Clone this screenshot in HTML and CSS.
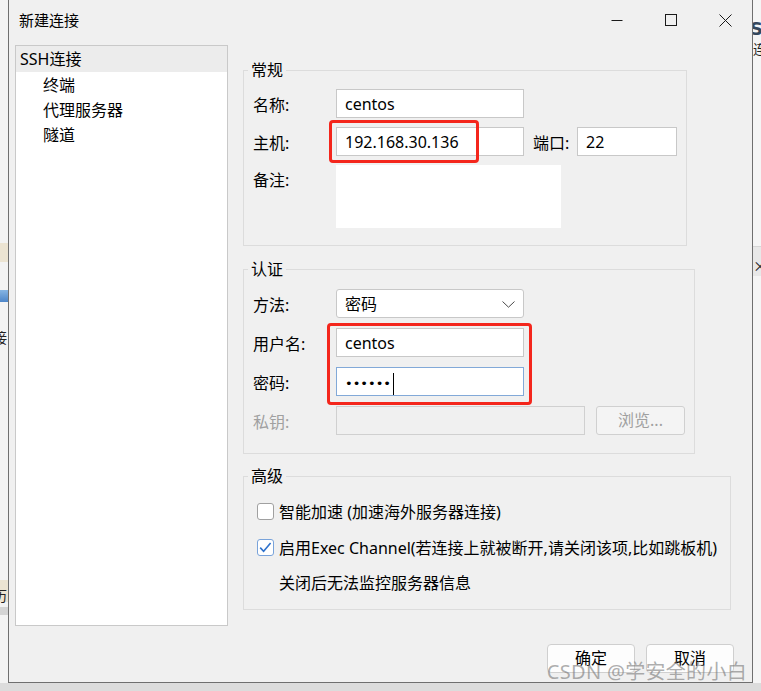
FILE: index.html
```html
<!DOCTYPE html>
<html lang="zh-CN">
<head>
  <meta charset="UTF-8">
  <meta name="viewport" content="width=device-width, initial-scale=1.0">
  <title>新建连接</title>
  <link rel="stylesheet" href="styles.css">
</head>
<body>
  <div class="desk">
    <!-- fenêtre derrière, bord gauche -->
    <div class="edge edge-left">
      <div class="band band-a"></div>
      <div class="tile-icon"></div>
      <div class="peek peek-left">接</div>
      <div class="band band-b"><span class="peek peek-left">历</span></div>
      <div class="band band-c"></div>
    </div>

    <div class="dialog">
      <!-- Titre -->
      <div class="titlebar">
        <span class="title">新建连接</span>
        <div class="caption">
          <span class="cap">
            <svg width="12" height="12" viewBox="0 0 12 12"><path d="M0.5 6.5H11.5" stroke="#1a1a1a" stroke-width="1"/></svg>
          </span>
          <span class="cap">
            <svg width="12" height="12" viewBox="0 0 12 12"><rect x="0.5" y="0.5" width="11" height="11" fill="none" stroke="#1a1a1a" stroke-width="1"/></svg>
          </span>
          <span class="cap">
            <svg width="13" height="13" viewBox="0 0 13 13"><path d="M0.5 0.5L12.5 12.5M12.5 0.5L0.5 12.5" stroke="#1a1a1a" stroke-width="1"/></svg>
          </span>
        </div>
      </div>

      <div class="main">
        <!-- Arbre -->
        <ul class="tree">
          <li class="node selected">SSH连接</li>
          <li class="node">终端</li>
          <li class="node">代理服务器</li>
          <li class="node">隧道</li>
        </ul>

        <div class="pane">
          <!-- 常规 -->
          <fieldset class="group general">
            <legend>常规</legend>
            <div class="form general-form">
              <label>名称:</label>
              <div class="field">centos</div>
              <span></span><span></span>

              <label>主机:</label>
              <div class="field">192.168.30.136<span class="mark mark-host"></span></div>
              <label class="port-label">端口:</label>
              <div class="field">22</div>

              <label class="top">备注:</label>
              <div class="field memo"></div>
            </div>
          </fieldset>

          <!-- 认证 -->
          <fieldset class="group auth">
            <legend>认证</legend>
            <div class="form auth-form">
              <label>方法:</label>
              <div class="field select">
                <span>密码</span>
                <svg width="13" height="7" viewBox="0 0 13 7"><path d="M0.5 0.5L6.5 6.2L12.5 0.5" fill="none" stroke="#4a4a4a" stroke-width="1"/></svg>
              </div>

              <label>用户名:</label>
              <div class="field">centos<span class="mark mark-login"></span></div>

              <label>密码:</label>
              <div class="field focus"><span class="dots">••••••</span><span class="caret"></span></div>

              <label class="muted">私钥:</label>
              <div class="key-row">
                <div class="field disabled"></div>
                <div class="browse">浏览...</div>
              </div>
            </div>
          </fieldset>

          <!-- 高级 -->
          <fieldset class="group adv">
            <legend>高级</legend>
            <div class="options">
              <div class="check-row"><span class="box"></span>智能加速 (加速海外服务器连接)</div>
              <div class="check-row">
                <span class="box on">
                  <svg width="15" height="15" viewBox="0 0 15 15"><path d="M2.2 7.6L5.6 11.2L12.6 3" fill="none" stroke="#2f72cc" stroke-width="1.6"/></svg>
                </span>启用Exec Channel(若连接上就被断开,请关闭该项,比如跳板机)
              </div>
              <div class="note">关闭后无法监控服务器信息</div>
            </div>
          </fieldset>
        </div>
      </div>

      <div class="footer">
        <button class="btn">确定</button>
        <button class="btn">取消</button>
      </div>

      <div class="watermark">CSDN @学安全的小白</div>
    </div>

    <!-- fenêtre derrière, bord droit -->
    <div class="edge edge-right">
      <div class="peek logo-peek">S</div>
      <div class="peek text-peek">连</div>
      <div class="band band-d"><span class="peek">×</span></div>
    </div>
  </div>
</body>
</html>
```

FILE: styles.css
```css
/* Base */
* {
  box-sizing: border-box;
}
html, body {
  margin: 0;
  padding: 0;
}
body {
  width: 761px;
  height: 691px;
  overflow: hidden;
  background: #dcdcdc;
  font-family: "Noto Sans", "Noto Sans CJK SC", sans-serif;
  font-size: 16px;
  color: #000;
}
.desk {
  display: flex;
  height: 691px;
}
/* Bords de la fenêtre de fond */
.edge {
  flex: none;
  width: 8px;
  height: 683px;
  overflow: hidden;
  display: flex;
  flex-direction: column;
  background: #f3f3f3;
}
.band-a {
  margin-top: 243px;
  height: 19px;
  background: #ece4d2;
}
.tile-icon {
  margin-top: 28px;
  height: 12px;
  background: linear-gradient(#86b5e3, #4d85c8);
}
.peek {
  white-space: nowrap;
  font-family: "Noto Sans CJK SC", sans-serif;
  font-size: 14px;
  line-height: 14px;
  color: #222;
}
.peek-left {
  margin-left: -7px;
}
.edge-left > .peek-left {
  margin-top: 28px;
}
.band-b {
  margin-top: 236px;
  height: 22px;
  background: #ece4d2;
  padding-top: 4px;
}
.band-c {
  margin-top: 5px;
  height: 8px;
  background: #d4d4d4;
}
.edge-right {
  background: #f5f5f5;
}
.logo-peek {
  margin-top: 20px;
  margin-left: -3px;
  font-family: "DejaVu Sans", sans-serif;
  font-weight: bold;
  font-size: 18px;
  line-height: 18px;
  color: #34475c;
}
.text-peek {
  margin-top: 4px;
  font-size: 13px;
}
.band-d {
  margin-top: 190px;
  height: 30px;
  background: #e8e8e8;
  border-top: 1px solid #d6d6d6;
  padding-top: 7px;
  color: #444;
}
/* Dialogue */
.dialog {
  flex: none;
  position: relative;
  width: 745px;
  height: 683px;
  background: #f0f0f0;
  border: 1px solid #6f6f6f;
  border-top: 0;
  display: flex;
  flex-direction: column;
}
.titlebar {
  height: 45px;
  display: flex;
  align-items: flex-start;
}
.title {
  flex: 1;
  padding-left: 10px;
  line-height: 40px;
  font-size: 15px;
}
.caption {
  display: flex;
}
.cap {
  width: 54px;
  height: 40px;
  display: flex;
  align-items: center;
  justify-content: center;
}
.main {
  display: flex;
  gap: 15px;
  height: 581px;
  padding-left: 6px;
}
/* Arbre */
.tree {
  flex: none;
  width: 213px;
  height: 581px;
  margin: 0;
  padding: 0;
  list-style: none;
  background: #fff;
  border: 1px solid #c9c9c9;
}
.node {
  padding-top: 2px;
  line-height: 23px;
  padding-left: 27px;
  white-space: nowrap;
}
.node.selected {
  padding-top: 1px;
  line-height: 25px;
  padding-left: 4px;
  background: #ececec;
}
/* Groupes */
.pane {
  padding-top: 17px;
  display: flex;
  flex-direction: column;
  align-items: flex-start;
}
.group {
  margin: 0;
  min-width: 0;
  border: 1px solid #dcdcdc;
  padding: 11px 9px 17px;
}
.group legend {
  padding: 0 3px;
  margin-left: -5px;
  font-size: 16px;
  line-height: 16px;
}
.general {
  width: 444px;
}
.auth {
  width: 452px;
  margin-top: 15px;
  padding-top: 12px;
  padding-bottom: 18px;
}
.adv {
  width: 488px;
  margin-top: 14px;
  padding-top: 14px;
  padding-bottom: 13px;
}
.form {
  display: grid;
  align-items: center;
}
.general-form {
  grid-template-columns: 83px 188px 53px 100px;
  row-gap: 9px;
}
.auth-form {
  grid-template-columns: 83px 1fr;
  row-gap: 10px;
}
.auth-form > .field {
  width: 188px;
}
label {
  white-space: nowrap;
  padding-top: 1px;
}
.port-label {
  padding-left: 9px;
}
.top {
  align-self: start;
  line-height: 29px;
}
.muted {
  color: #a0a0a0;
}
.field {
  position: relative;
  height: 29px;
  padding: 1px 8px 0;
  border: 1px solid #c8c8c8;
  background: #fff;
  line-height: 26px;
  white-space: nowrap;
}
.memo {
  grid-column: 2 / 5;
  width: 225px;
  height: 63px;
  border-color: #fff;
}
.select {
  display: flex;
  align-items: center;
  justify-content: space-between;
  border-radius: 3px;
}
.focus {
  border-color: #82a9d8;
}
.dots {
  font-family: "DejaVu Sans", sans-serif;
  font-size: 13px;
}
.caret {
  display: inline-block;
  width: 1px;
  height: 22px;
  margin-left: 2px;
  background: #000;
  vertical-align: middle;
}
.key-row {
  display: flex;
  gap: 11px;
}
.disabled {
  width: 249px;
  background: #f0f0f0;
  border-color: #d0d0d0;
}
.browse {
  width: 89px;
  height: 29px;
  border: 1px solid #d0d0d0;
  border-radius: 3px;
  background: #f4f4f4;
  color: #a0a0a0;
  text-align: center;
  line-height: 27px;
}
/* Cadres rouges d'annotation */
.mark {
  position: absolute;
  border: 3px solid #f4261c;
  border-radius: 4px;
}
.mark-host {
  left: -8px;
  top: -8px;
  width: 150px;
  height: 43px;
}
.mark-login {
  left: -10px;
  top: -6px;
  width: 205px;
  height: 82px;
}
/* Options */
.options {
  display: flex;
  flex-direction: column;
  gap: 10px;
}
.check-row {
  display: flex;
  align-items: center;
  gap: 5px;
  height: 26px;
  padding-left: 4px;
  white-space: nowrap;
}
.box {
  flex: none;
  width: 17px;
  height: 17px;
  border: 1px solid #a0a0a0;
  border-radius: 3px;
  background: #fff;
  display: flex;
  align-items: center;
  justify-content: center;
}
.box.on {
  border-color: #79a3da;
}
.note {
  line-height: 26px;
  padding-left: 26px;
}
/* Boutons */
.footer {
  display: flex;
  justify-content: flex-end;
  gap: 11px;
  padding: 18px 18px 0 0;
}
.btn {
  width: 88px;
  height: 29px;
  padding: 0;
  border: 1px solid #cfcfcf;
  border-radius: 4px;
  background: #fdfdfd;
  font: inherit;
  line-height: 27px;
  color: #000;
}
.watermark {
  position: absolute;
  right: 5px;
  bottom: -3px;
  font-family: "Noto Sans", "Noto Sans CJK SC", sans-serif;
  font-size: 20px;
  line-height: 26px;
  letter-spacing: 0.3px;
  color: rgba(120, 120, 120, 0.6);
  white-space: nowrap;
}
```
